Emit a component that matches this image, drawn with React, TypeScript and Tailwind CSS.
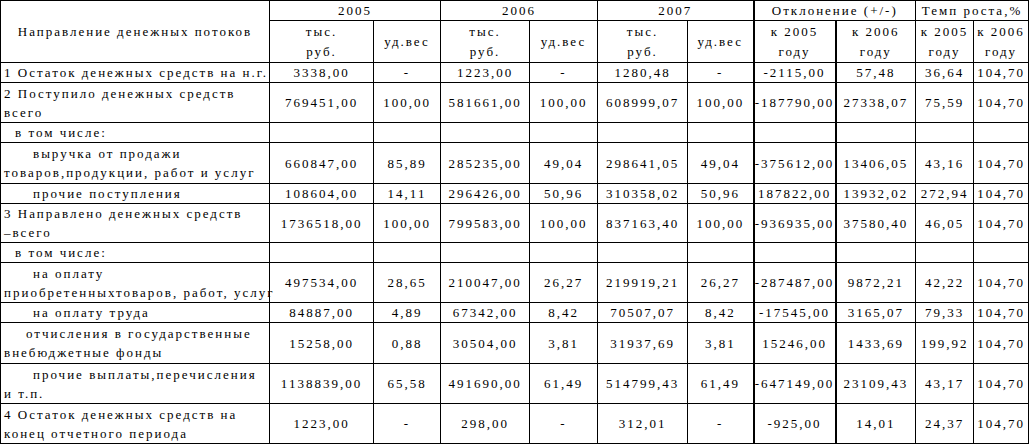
const widths = [269, 104, 67, 89, 68, 90, 66, 82, 80, 58, 55];

type Row = {
  label: string[];
  indent?: string;
  h: string;
  v: string[];
};

const rows: Row[] = [
  {
    label: ["1 Остаток денежных средств на н.г."],
    h: "h-[20px]",
    v: ["3338,00", "-", "1223,00", "-", "1280,48", "-", "-2115,00", "57,48", "36,64", "104,70"],
  },
  {
    label: ["2 Поступило денежных средств", "всего"],
    h: "h-[40px]",
    v: ["769451,00", "100,00", "581661,00", "100,00", "608999,07", "100,00", "-187790,00", "27338,07", "75,59", "104,70"],
  },
  { label: ["в том числе:"], indent: "indent-[11px]", h: "h-[20px]", v: [] },
  {
    label: ["выручка от продажи", "товаров,продукции, работ и услуг"],
    indent: "indent-[29px]",
    h: "h-[41px]",
    v: ["660847,00", "85,89", "285235,00", "49,04", "298641,05", "49,04", "-375612,00", "13406,05", "43,16", "104,70"],
  },
  {
    label: ["прочие поступления"],
    indent: "indent-[29px]",
    h: "h-[20px]",
    v: ["108604,00", "14,11", "296426,00", "50,96", "310358,02", "50,96", "187822,00", "13932,02", "272,94", "104,70"],
  },
  {
    label: ["3 Направлено денежных средств", "–всего"],
    h: "h-[39px]",
    v: ["1736518,00", "100,00", "799583,00", "100,00", "837163,40", "100,00", "-936935,00", "37580,40", "46,05", "104,70"],
  },
  { label: ["в том числе:"], indent: "indent-[11px]", h: "h-[20px]", v: [] },
  {
    label: ["на оплату", "приобретенныхтоваров, работ, услуг"],
    indent: "indent-[29px]",
    h: "h-[40px]",
    v: ["497534,00", "28,65", "210047,00", "26,27", "219919,21", "26,27", "-287487,00", "9872,21", "42,22", "104,70"],
  },
  {
    label: ["на оплату труда"],
    indent: "indent-[29px]",
    h: "h-[20px]",
    v: ["84887,00", "4,89", "67342,00", "8,42", "70507,07", "8,42", "-17545,00", "3165,07", "79,33", "104,70"],
  },
  {
    label: ["отчисления в государственные", "внебюджетные фонды"],
    indent: "indent-[22px]",
    h: "h-[41px]",
    v: ["15258,00", "0,88", "30504,00", "3,81", "31937,69", "3,81", "15246,00", "1433,69", "199,92", "104,70"],
  },
  {
    label: ["прочие выплаты,перечисления", "и т.п."],
    indent: "indent-[29px]",
    h: "h-[40px]",
    v: ["1138839,00", "65,58", "491690,00", "61,49", "514799,43", "61,49", "-647149,00", "23109,43", "43,17", "104,70"],
  },
  {
    label: ["4 Остаток денежных средств на", "конец отчетного периода"],
    h: "h-[40px]",
    v: ["1223,00", "-", "298,00", "-", "312,01", "-", "-925,00", "14,01", "24,37", "104,70"],
  },
];

const cell = "border border-black p-0 text-center align-middle font-normal";

// thick verticals sit before the two "Отклонение" columns
const thick = (i: number) => (i === 6 || i === 7 ? " border-l-2" : "");

export default function App() {
  return (
    <div className="w-[1032px] h-[446px] bg-white overflow-hidden font-['Liberation_Serif','Times_New_Roman',serif]">
      <table className="table-fixed border-collapse w-[1028px] text-black text-[13px] leading-[19px] tracking-[2px] font-['Liberation_Serif','Times_New_Roman',serif]">
        <colgroup>
          {widths.map((w, i) => (
            <col key={i} style={{ width: w }} />
          ))}
        </colgroup>
        <thead>
          <tr className="h-[20px]">
            <th rowSpan={2} className={cell}>
              Направление денежных потоков
            </th>
            <th colSpan={2} className={cell}>2005</th>
            <th colSpan={2} className={cell}>2006</th>
            <th colSpan={2} className={cell}>2007</th>
            <th colSpan={2} className={cell + " border-l-2"}>
              Отклонение (+/-)
            </th>
            <th colSpan={2} className={cell}>Темп роста,%</th>
          </tr>
          <tr className="h-[42px]">
            {["тыс.|руб.", "уд.вес", "тыс.|руб.", "уд.вес", "тыс.|руб.", "уд.вес", "к 2005|году", "к 2006|году", "к 2005|году", "к 2006|году"].map(
              (t, i) => (
                <th key={i} className={cell + " leading-[20px] whitespace-nowrap" + thick(i)}>
                  {t.split("|").map((line, j) => (
                    <div key={j}>{line}</div>
                  ))}
                </th>
              )
            )}
          </tr>
        </thead>
        <tbody>
          {rows.map((r, ri) => (
            <tr key={ri} className={r.h}>
              <td className={"border border-black py-0 pl-[3px] pr-0 text-left align-middle whitespace-nowrap " + (r.indent ?? "")}>
                {r.label.map((line, j) => (
                  <span key={j}>
                    {j > 0 && <br />}
                    {line}
                  </span>
                ))}
              </td>
              {Array.from({ length: 10 }).map((_, i) => (
                <td key={i} className={cell + " whitespace-nowrap" + thick(i)}>
                  {r.v[i] ?? ""}
                </td>
              ))}
            </tr>
          ))}
        </tbody>
      </table>
    </div>
  );
}
